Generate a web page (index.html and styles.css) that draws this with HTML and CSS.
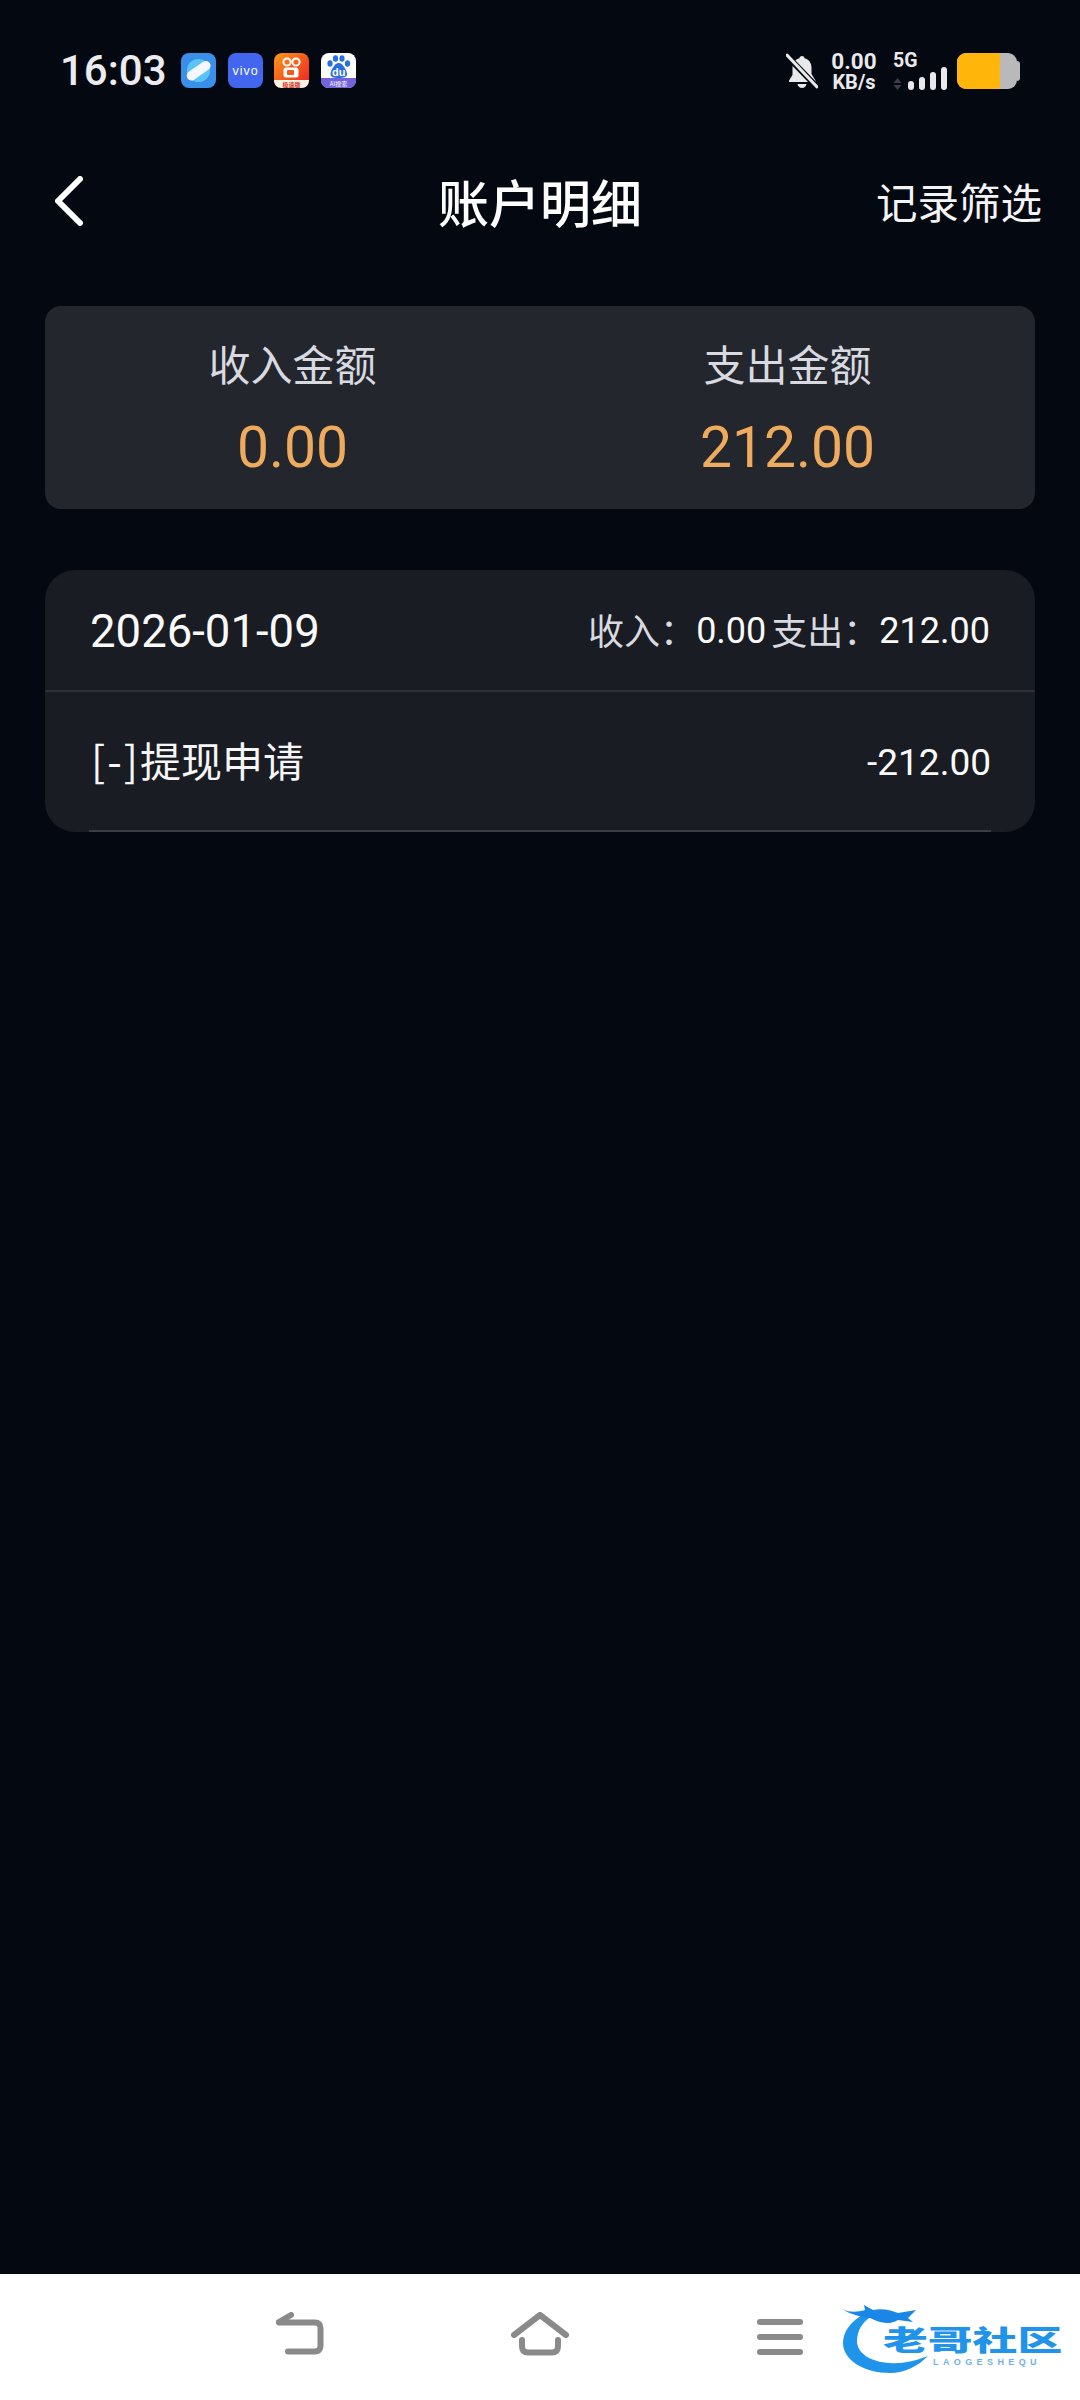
FILE: index.html
```html
<!DOCTYPE html>
<html lang="zh-CN">
  <head>
    <meta charset="UTF-8" />
    <meta name="viewport" content="width=device-width, initial-scale=1.0" />
    <title>账户明细</title>
    <link rel="stylesheet" href="styles.css">
  </head>
  <body>
    <div class="status-bar">
      <div class="status-left">
        <span class="time">16:03</span>
        <div class="app-icons">
          <svg class="app-icon" viewBox="0 0 35 35">
            <rect width="35" height="35" rx="8" fill="#3a8fe8"/>
            <circle cx="17.5" cy="17.5" r="11.5" fill="#5cc3f5"/>
            <rect x="4" y="13" width="27" height="9.5" rx="4.7" fill="#f4f8fd" transform="rotate(-35 17.5 17.5)"/>
          </svg>
          <svg class="app-icon" viewBox="0 0 35 35">
            <rect width="35" height="35" rx="8" fill="#4267ee"/>
            <text x="17.5" y="22" class="vivo-text">vivo</text>
          </svg>
          <svg class="app-icon" viewBox="0 0 35 35">
            <defs>
              <linearGradient id="ksBg" x1="0" y1="0" x2="1" y2="1">
                <stop offset="0" stop-color="#fb9a17"/>
                <stop offset="1" stop-color="#ee1c25"/>
              </linearGradient>
            </defs>
            <rect width="35" height="35" rx="8" fill="url(#ksBg)"/>
            <path d="M0 27H35C35 32 32 35 27 35H8C3 35 0 32 0 27Z" fill="#fdf3e4"/>
            <circle cx="13" cy="9" r="3.6" fill="none" stroke="#fff" stroke-width="2"/>
            <circle cx="22" cy="9" r="3.6" fill="none" stroke="#fff" stroke-width="2"/>
            <rect x="9.5" y="14.5" width="15" height="10" rx="2.5" fill="#fff"/>
            <rect x="13" y="17" width="7" height="5" rx="1" fill="#f25a1f"/>
            <text x="17.5" y="33.5" class="tiny-text ks-text">极速版</text>
          </svg>
          <svg class="app-icon" viewBox="0 0 35 35">
            <rect width="35" height="35" rx="8" fill="#fff"/>
            <path d="M0 25H35V27C35 32 32 35 27 35H8C3 35 0 32 0 27Z" fill="#7461dc"/>
            <ellipse cx="9" cy="10.5" rx="2.6" ry="3.3" fill="#2a6fe0"/>
            <ellipse cx="14.5" cy="5.5" rx="2.6" ry="3.3" fill="#2a6fe0"/>
            <ellipse cx="21" cy="5.5" rx="2.6" ry="3.3" fill="#2a6fe0"/>
            <ellipse cx="26.5" cy="10.5" rx="2.6" ry="3.3" fill="#2a6fe0"/>
            <path d="M17.7 10C22 10 26 18 26 21C26 24 23 25 17.7 25C12.5 25 9.5 24 9.5 21C9.5 18 13.5 10 17.7 10Z" fill="#2a6fe0"/>
            <text x="17.7" y="22.5" class="du-text">du</text>
            <text x="17.5" y="33" class="tiny-text">AI搜索</text>
          </svg>
        </div>
      </div>
      <div class="status-right">
        <svg class="bell" viewBox="0 0 32 36">
          <path d="M16 3C17.5 3 18.5 4 18.5 5.2C23 6.3 25.5 10 25.5 14.5V21L29.5 27.5V29H3V27.5L6.5 22V14.5C6.5 10 9 6.3 13.5 5.2C13.5 4 14.5 3 16 3Z" fill="#e9e9ec"/>
          <path d="M11.5 31H20.5C20 33.5 18.2 35 16 35C13.8 35 12 33.5 11.5 31Z" fill="#e9e9ec"/>
          <path d="M-2 0L33 36" stroke="#040811" stroke-width="6"/>
          <path d="M1 2L31 34" stroke="#e9e9ec" stroke-width="3" stroke-linecap="round"/>
        </svg>
        <div class="net-speed">
          <span class="speed-num">0.00</span>
          <span class="speed-unit">KB/s</span>
        </div>
        <div class="signal">
          <span class="signal-type">5G</span>
          <svg class="updown" viewBox="0 0 9 12">
            <path d="M4.5 0L8.5 5H0.5Z" fill="#3c3f47"/>
            <path d="M4.5 12L8.5 7H0.5Z" fill="#3c3f47"/>
          </svg>
        </div>
        <div class="signal-bars">
          <i class="bar bar-1"></i>
          <i class="bar bar-2"></i>
          <i class="bar bar-3"></i>
          <i class="bar bar-4"></i>
        </div>
        <div class="battery">
          <div class="battery-body"><div class="battery-fill"></div></div>
          <div class="battery-tip"></div>
        </div>
      </div>
    </div>

    <div class="top-bar">
      <div class="back-cell">
        <svg class="back-icon" viewBox="0 0 28 50">
          <path d="M25 3L3 25L25 47" fill="none" stroke="#fff" stroke-width="6" stroke-linecap="round" stroke-linejoin="round"/>
        </svg>
      </div>
      <h1 class="page-title">账户明细</h1>
      <div class="filter-link">记录筛选</div>
    </div>

    <div class="summary-card">
      <div class="summary-col">
        <div class="summary-label">收入金额</div>
        <div class="summary-value">0.00</div>
      </div>
      <div class="summary-col">
        <div class="summary-label">支出金额</div>
        <div class="summary-value">212.00</div>
      </div>
    </div>

    <div class="record-card">
      <div class="record-head">
        <span class="record-date">2026-01-09</span>
        <span class="record-total">
          <span class="total-label">收入：</span><span class="total-num">0.00</span>
          <span class="total-label total-out">支出：</span><span class="total-num">212.00</span>
        </span>
      </div>
      <div class="record-row">
        <span class="record-name"><span class="record-tag">[-]</span>提现申请</span>
        <span class="record-amount">-212.00</span>
      </div>
    </div>

    <div class="spacer"></div>

    <div class="nav-bar">
      <svg class="nav-back" viewBox="0 0 48 43">
        <path d="M3 10.5H39C42.5 10.5 44.5 12.5 44.5 16V34C44.5 37.500 42.5 39.500 39 39.500H12" fill="none" stroke="#8a8a8a" stroke-width="6" stroke-linecap="round"/>
        <path d="M3 10L15 3" fill="none" stroke="#8a8a8a" stroke-width="6" stroke-linecap="round"/>
      </svg>
      <svg class="nav-home" viewBox="0 0 58 44">
        <path d="M3 23L29 3L55 23" fill="none" stroke="#8a8a8a" stroke-width="6" stroke-linecap="round" stroke-linejoin="round"/>
        <path d="M11 28V34C11 38.500 13 40.500 17 40.500H41C45 40.500 47 38.500 47 34V28" fill="none" stroke="#8a8a8a" stroke-width="6" stroke-linecap="round"/>
      </svg>
      <div class="nav-menu">
        <i></i>
        <i></i>
        <i></i>
      </div>
      <div class="watermark">
        <svg class="dragon" viewBox="0 0 105 78">
          <path d="M24 16C10 24 3 34 3 45C3 62 24 75 50 75C65 75 78 68 88 58C75 63 62 66 50 65C30 64 17 55 17 43C17 33 22 24 32 18Z" fill="#1f94ea"/>
          <path d="M2 11C10 15 18 14 25 12L24 7L33 12C42 10 50 12 58 15L76 12L68 20L73 24L58 22C48 28 38 24 30 20C20 19 10 16 2 11Z" fill="#1a86e6"/>
        </svg>
        <span class="wm-name">老哥社区</span>
        <span class="wm-sub">LAOGESHEQU</span>
      </div>
    </div>
  </body>
</html>
```

FILE: styles.css
```css
* {
  box-sizing: border-box;
}
html, body {
  margin: 0;
  padding: 0;
}
body {
  width: 1080px;
  height: 2400px;
  display: flex;
  flex-direction: column;
  overflow: hidden;
  background-color: #040811;
  color: #fff;
  font-family: Roboto, "Noto Sans CJK SC", sans-serif;
}

/* status bar */
.status-bar {
  height: 141px;
  flex-shrink: 0;
  display: flex;
  align-items: center;
  justify-content: space-between;
  padding: 0 60px 0 60px;
}
.status-left {
  display: flex;
  align-items: center;
}
.time {
  font-size: 42px;
  font-weight: 500;
  color: #ececef;
  width: 121px;
}
.app-icons {
  display: flex;
  gap: 11.5px;
}
.app-icon {
  width: 35px;
  height: 35px;
  display: block;
}
.vivo-text {
  font-family: "Liberation Sans", sans-serif;
  font-size: 12.500px;
  letter-spacing: 1px;
  fill: #fff;
  text-anchor: middle;
}
.tiny-text {
  font-family: "Noto Sans CJK SC", sans-serif;
  font-size: 6px;
  fill: #fff;
  text-anchor: middle;
}
.ks-text {
  fill: #d8301f;
  font-weight: 700;
}
.du-text {
  font-family: "Liberation Sans", sans-serif;
  font-size: 11px;
  font-weight: 700;
  fill: #fff;
  text-anchor: middle;
}
.status-right {
  display: flex;
  align-items: center;
}
.bell {
  width: 32px;
  height: 36px;
  display: block;
  margin-right: 10px;
}
.net-speed {
  display: flex;
  flex-direction: column;
  align-items: center;
  width: 52px;
  color: #e9e9ec;
  font-weight: 700;
}
.speed-num {
  font-size: 22.500px;
  line-height: 22px;
}
.speed-unit {
  font-size: 20px;
  line-height: 20px;
}
.signal {
  display: flex;
  flex-direction: column;
  margin-left: 13px;
  width: 27px;
  height: 38px;
  justify-content: space-between;
}
.signal-type {
  font-size: 19.500px;
  font-weight: 700;
  line-height: 18px;
  color: #e9e9ec;
}
.updown {
  width: 9px;
  height: 12px;
  display: block;
}
.signal-bars {
  display: flex;
  align-items: flex-end;
  gap: 5px;
  height: 24px;
  margin: 14px 10px 0 -12px;
}
.bar {
  display: block;
  width: 6px;
  background-color: #e9e9ec;
  border-radius: 3px;
}
.bar-1 { height: 9px; }
.bar-2 { height: 13px; }
.bar-3 { height: 18px; }
.bar-4 { height: 23px; }
.battery {
  display: flex;
  align-items: center;
}
.battery-body {
  width: 60px;
  height: 36px;
  background-color: #b9b9bc;
  border-radius: 9px;
  overflow: hidden;
}
.battery-fill {
  width: 43px;
  height: 100%;
  background-color: #ffb50a;
}
.battery-tip {
  width: 3px;
  height: 20px;
  background-color: #b9b9bc;
  border-radius: 0 3px 3px 0;
}

/* header */
.top-bar {
  height: 126px;
  flex-shrink: 0;
  display: grid;
  grid-template-columns: 1fr auto 1fr;
  align-items: center;
  padding: 0 38px 6px;
}
.back-cell {
  padding-left: 17px;
}
.back-icon {
  width: 28px;
  height: 50px;
  display: block;
}
.page-title {
  margin: 0;
  font-family: "Noto Sans CJK SC", sans-serif;
  font-size: 51px;
  font-weight: 500;
  color: #fff;
}
.filter-link {
  justify-self: end;
  font-family: "Noto Sans CJK SC", sans-serif;
  font-size: 41.500px;
  color: #f4f4f6;
}

/* summary */
.summary-card {
  flex-shrink: 0;
  width: 990px;
  height: 203px;
  margin: 39px 0 0 45px;
  display: grid;
  grid-template-columns: 1fr 1fr;
  background-color: #23262d;
  border-radius: 16px;
}
.summary-col {
  display: flex;
  flex-direction: column;
  align-items: center;
  padding-top: 27px;
}
.summary-label {
  font-family: "Noto Sans CJK SC", sans-serif;
  font-size: 42px;
  line-height: 60px;
  color: #d8dae0;
}
.summary-value {
  font-size: 57px;
  font-weight: 450;
  line-height: 68px;
  margin-top: 21px;
  color: #eeab5e;
}

/* records */
.record-card {
  flex-shrink: 0;
  width: 990px;
  height: 262px;
  margin: 61px 0 0 45px;
  background-color: #191c22;
  border-radius: 30px;
  overflow: hidden;
}
.record-head {
  height: 122px;
  display: flex;
  align-items: center;
  justify-content: space-between;
  padding: 2px 45px 0 45px;
  border-bottom: 2px solid #2e3138;
}
.record-date {
  font-size: 45.500px;
  color: #fafafa;
}
.record-total {
  display: flex;
  align-items: center;
}
.total-label {
  font-family: "Noto Sans CJK SC", sans-serif;
  font-size: 36px;
  margin-bottom: 4px;
  color: #d8dae0;
}
.total-out {
  margin-left: 5px;
}
.total-num {
  font-size: 36px;
  color: #fafafa;
}
.record-row {
  height: 140px;
  display: flex;
  align-items: center;
  justify-content: space-between;
  margin: 0 44px;
  padding-left: 2px;
  border-bottom: 2px solid #3a3d45;
}
.record-name {
  font-family: "Noto Sans CJK SC", sans-serif;
  font-size: 41px;
  margin-bottom: 6px;
  color: #f6f6f8;
}
.record-tag {
  letter-spacing: 2px;
  font-size: 42px;
}
.record-amount {
  font-size: 37px;
  margin-top: 3px;
  color: #fafafa;
}

.spacer {
  flex: 1;
}

/* nav */
.nav-bar {
  position: relative;
  height: 126px;
  flex-shrink: 0;
  display: flex;
  align-items: flex-start;
  background-color: #fff;
  padding: 38px 0 0 276px;
}
.nav-back {
  width: 48px;
  height: 43px;
  display: block;
}
.nav-home {
  width: 58px;
  height: 44px;
  display: block;
  margin-left: 187px;
}
.nav-menu {
  width: 46px;
  display: flex;
  flex-direction: column;
  gap: 9px;
  margin: 7px 0 0 188px;
}
.nav-menu i {
  display: block;
  height: 6px;
  background-color: #8a8a8a;
  border-radius: 3px;
}
.watermark {
  position: absolute;
  left: 840px;
  top: 24px;
  width: 230px;
  height: 80px;
}
.dragon {
  position: absolute;
  left: 0;
  top: 0;
  width: 105px;
  height: 78px;
}
.wm-name {
  position: absolute;
  left: 43px;
  top: 30px;
  font-family: "Liberation Sans", "Noto Sans CJK SC", sans-serif;
  font-size: 28px;
  font-weight: 900;
  line-height: 27px;
  color: #1f94ea;
  white-space: nowrap;
  transform: scaleX(1.6);
  transform-origin: left center;
}
.wm-sub {
  position: absolute;
  left: 93px;
  top: 59px;
  font-family: "Liberation Sans", sans-serif;
  font-size: 9px;
  line-height: 10px;
  font-weight: 700;
  letter-spacing: 4.4px;
  color: #6fb2ea;
  white-space: nowrap;
}
```
